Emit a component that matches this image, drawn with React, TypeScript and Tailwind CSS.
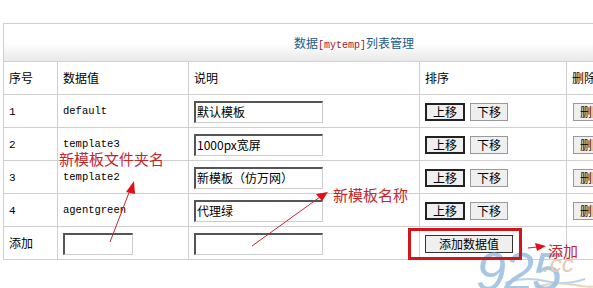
const cjk = { fontFamily: '"Noto Sans CJK SC", "Liberation Sans", sans-serif' };
const mono = { fontFamily: '"Liberation Mono", "DejaVu Sans Mono", monospace' };

const rows = [
  { id: "1", value: "default", note: "默认模板" },
  { id: "2", value: "template3", note: "1000px宽屏" },
  { id: "3", value: "template2", note: "新模板（仿万网）" },
  { id: "4", value: "agentgreen", note: "代理绿" },
];

function Btn({ label, primary }: { label: string; primary?: boolean }) {
  return (
    <span
      className={
        "inline-flex h-[18px] items-center justify-center bg-[#efefef] px-[6px] text-[12px] leading-none text-black " +
        (primary ? "border-2 border-[#222]" : "border border-[#999]")
      }
      style={cjk}
    >
      {label}
    </span>
  );
}

function Field({ text, w }: { text?: string; w: string }) {
  return (
    <div
      className={
        w +
        " h-[22px] border-t-2 border-l-2 border-r border-b border-t-[#555] border-l-[#555] border-r-[#ccc] border-b-[#ccc] bg-white pl-[1px] text-[12px] leading-[18px] text-black"
      }
      style={cjk}
    >
      {text}
    </div>
  );
}

export default function App() {
  const cell = "border-r border-b border-[#cfcfcf] px-[5px] text-[12px] text-black";
  return (
    <div className="relative h-[288px] w-[593px] overflow-hidden bg-white" style={cjk}>
      <div className="pl-[3px] pt-[23px]">
        <div className="w-[640px] border-l border-t border-[#cfcfcf]">
          <div className="flex h-[38px] items-center border-b border-r border-[#cfcfcf] bg-gradient-to-b from-white from-50% to-[#e9e9e9]">
            <div className="w-[590px] pl-[290px] pt-[2px] text-[12px] text-[#1d5a86]">
              数据<span className="text-[10px] text-[#a3172b]" style={mono}>[mytemp]</span>列表管理
            </div>
          </div>
          <div className="grid h-[33px] grid-cols-[54px_131px_231px_147px_77px]">
            <div className={cell + " flex items-center"}>序号</div>
            <div className={cell + " flex items-center"}>数据值</div>
            <div className={cell + " flex items-center"}>说明</div>
            <div className={cell + " flex items-center"}>排序</div>
            <div className={cell + " flex items-center"}>删除</div>
          </div>
          {rows.map((r) => (
            <div key={r.id} className="grid h-[33px] grid-cols-[54px_131px_231px_147px_77px]">
              <div className={cell + " flex items-center pt-[2px]"} style={mono}>
                <span className="text-[11px]">{r.id}</span>
              </div>
              <div className={cell + " flex items-center pt-[2px]"}>
                <span className="text-[10.5px]" style={mono}>{r.value}</span>
              </div>
              <div className={cell + " flex items-center pt-[1px]"}>
                <Field text={r.note} w="w-[129px]" />
              </div>
              <div className={cell + " flex items-center gap-[5px] pt-[1px]"}>
                <Btn label="上移" primary />
                <Btn label="下移" />
              </div>
              <div className={cell + " flex items-center pl-[6px] pt-[1px]"}>
                <Btn label="删除" />
              </div>
            </div>
          ))}
          <div className="grid h-[33px] grid-cols-[54px_131px_231px_147px_77px]">
            <div className={cell + " flex items-center"}>添加</div>
            <div className={cell + " flex items-center pt-[2px]"}>
              <Field w="w-[70px]" />
            </div>
            <div className={cell + " flex items-center pt-[2px]"}>
              <Field w="w-[129px]" />
            </div>
            <div className={cell + " flex items-center pt-[1px]"}>
              <span className="inline-flex h-[18px] w-[88px] items-center justify-center border border-[#333] bg-[#efefef] text-[12px] text-black">
                添加数据值
              </span>
            </div>
            <div className={cell}></div>
          </div>
        </div>
      </div>

      {/* watermark */}
      <svg className="absolute left-0 top-0" width="593" height="288" viewBox="0 0 593 288">
        <path d="M505 283 Q525 276 545 281 T585 279" stroke="#b9d3ea" strokeWidth="2" fill="none" />
        <path d="M535 287 Q555 281 575 285 T600 284" stroke="#e7d4bd" strokeWidth="2" fill="none" />
      </svg>
      <div
        className="absolute left-[476px] top-[244px] text-[54px] italic leading-none tracking-[-2px] text-[#9fc1e2] opacity-90"
        style={{ fontFamily: '"Liberation Sans", sans-serif' }}
      >
        925
      </div>
      <div
        className="absolute left-[543px] top-[252px] text-[24px] italic leading-none text-[#e3ccb0]"
        style={{ fontFamily: '"Liberation Sans", sans-serif' }}
      >
        .cc
      </div>

      {/* annotations */}
      <div className="absolute left-[408px] top-[228px] h-[32px] w-[114px] border-[3px] border-[#d3141b]" />
      <div className="absolute left-[59px] top-[151px] text-[15px] leading-none text-[#c4262c]">新模板文件夹名</div>
      <div className="absolute left-[333px] top-[187px] text-[15px] leading-none text-[#c4262c]">新模板名称</div>
      <div className="absolute left-[548px] top-[243px] text-[15px] leading-none text-[#c4262c]">添加</div>

      <svg className="absolute left-0 top-0" width="593" height="288" viewBox="0 0 593 288">
        <line x1="110" y1="242" x2="130" y2="190" stroke="#c4262c" strokeWidth="1" />
        <polygon points="134,181 126,192 135,194" fill="#e0101a" />
        <line x1="252" y1="246" x2="320" y2="197" stroke="#c4262c" strokeWidth="1" />
        <polygon points="328,192 316,194 322,201" fill="#e0101a" />
        <line x1="528" y1="248" x2="538" y2="247" stroke="#c4262c" strokeWidth="1" />
        <polygon points="546,246 535,243 537,251" fill="#e0101a" />
      </svg>
    </div>
  );
}
